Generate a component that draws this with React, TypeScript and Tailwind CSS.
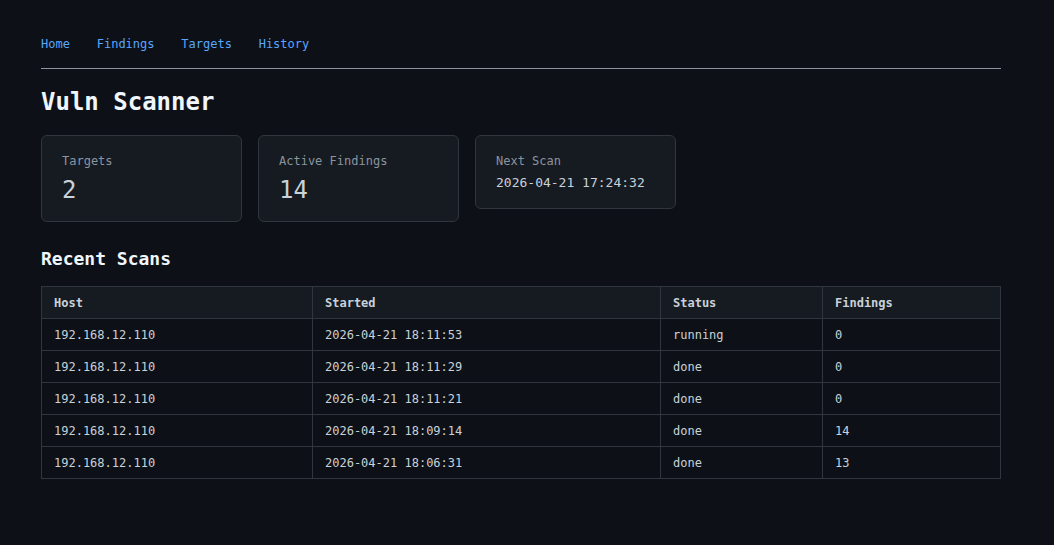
const scans = [
  { host: '192.168.12.110', started: '2026-04-21 18:11:53', status: 'running', findings: 0 },
  { host: '192.168.12.110', started: '2026-04-21 18:11:29', status: 'done', findings: 0 },
  { host: '192.168.12.110', started: '2026-04-21 18:11:21', status: 'done', findings: 0 },
  { host: '192.168.12.110', started: '2026-04-21 18:09:14', status: 'done', findings: 14 },
  { host: '192.168.12.110', started: '2026-04-21 18:06:31', status: 'done', findings: 13 },
];

function StatCard({ label, value, small }: { label: string; value: string; small?: boolean }) {
  return (
    <div className="w-[201px] rounded-md border border-[#30363d] bg-[#161b22] px-5 pt-4 pb-4">
      <div className="text-[12px] leading-[18px] text-[#8b949e]">{label}</div>
      {small ? (
        <div className="mt-[4px] text-[13px] leading-[18px] text-[#c9d1d9]">{value}</div>
      ) : (
        <div className="mt-[5px] text-[24px] leading-[30px] text-[#c9d1d9]">{value}</div>
      )}
    </div>
  );
}

export default function App() {
  return (
    <div className="min-h-screen bg-[#0d1117] text-[#c9d1d9] font-['DejaVu_Sans_Mono',monospace]">
      <div className="w-[960px] ml-[41px] pt-[35px]">
        <nav className="flex gap-[26.8px] pb-[15px] border-b border-[#8b949e] text-[12px] leading-[18px]">
          <a className="text-[#58a6ff]" href="#">Home</a>
          <a className="text-[#58a6ff]" href="#">Findings</a>
          <a className="text-[#58a6ff]" href="#">Targets</a>
          <a className="text-[#58a6ff]" href="#">History</a>
        </nav>

        <h1 className="mt-[17px] text-[24px] leading-[32px] font-bold text-[#f0f6fc]">Vuln Scanner</h1>

        <div className="mt-[17px] flex items-start gap-4">
          <StatCard label="Targets" value="2" />
          <StatCard label="Active Findings" value="14" />
          <StatCard label="Next Scan" value="2026-04-21 17:24:32" small />
        </div>

        <h2 className="mt-[25px] text-[18px] leading-[24px] font-bold text-[#f0f6fc]">Recent Scans</h2>

        <table className="mt-[15px] w-full border-collapse text-[12px] leading-[18px]">
          <thead>
            <tr className="bg-[#161b22] text-left">
              <th className="w-[271px] h-[32px] border border-[#30363d] px-3 font-bold text-[#c9d1d9]">Host</th>
              <th className="w-[348px] h-[32px] border border-[#30363d] px-3 font-bold text-[#c9d1d9]">Started</th>
              <th className="w-[162px] h-[32px] border border-[#30363d] px-3 font-bold text-[#c9d1d9]">Status</th>
              <th className="h-[32px] border border-[#30363d] px-3 font-bold text-[#c9d1d9]">Findings</th>
            </tr>
          </thead>
          <tbody>
            {scans.map((s, i) => (
              <tr key={i}>
                <td className="h-[32px] border border-[#30363d] px-3">{s.host}</td>
                <td className="h-[32px] border border-[#30363d] px-3">{s.started}</td>
                <td className="h-[32px] border border-[#30363d] px-3">{s.status}</td>
                <td className="h-[32px] border border-[#30363d] px-3">{s.findings}</td>
              </tr>
            ))}
          </tbody>
        </table>
      </div>
    </div>
  );
}
